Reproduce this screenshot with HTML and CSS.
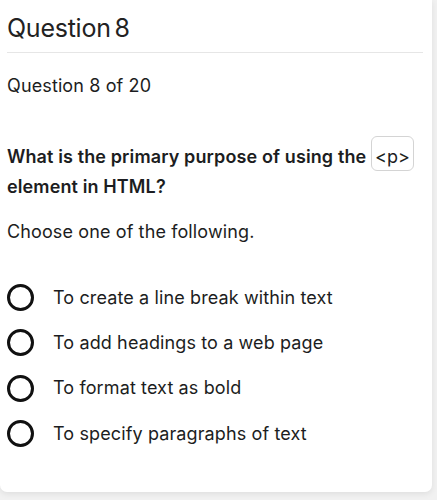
FILE: index.html
```html
<!DOCTYPE html>
<html lang="en">
<head>
<meta charset="utf-8">
<link rel="stylesheet" href="styles.css">
</head>
<body>
<div class="card">
  <h1 class="title">Question 8</h1>
  <hr class="rule">
  <p class="counter">Question 8 of 20</p>
  <p class="question">What is the primary purpose of using the <code class="tag">&lt;p&gt;</code> element in HTML?</p>
  <p class="hint">Choose one of the following.</p>
  <ul class="options">
    <li class="option"><span class="radio"></span><span class="label">To create a line break within text</span></li>
    <li class="option"><span class="radio"></span><span class="label">To add headings to a web page</span></li>
    <li class="option"><span class="radio"></span><span class="label">To format text as bold</span></li>
    <li class="option"><span class="radio"></span><span class="label">To specify paragraphs of text</span></li>
  </ul>
</div>
</body>
</html>
```
FILE: styles.css
```css
html, body {
  margin: 0;
  padding: 0;
}
body {
  background: #f1f1f1;
  font-family: Inter, "Noto Sans", sans-serif;
  color: #1c1d21;
  width: 437px;
  height: 500px;
  overflow: hidden;
}
.card {
  width: 432px;
  box-sizing: border-box;
  background: #fff;
  padding: 10px 9px 36px 7px;
  border-radius: 0 0 7px 7px;
  box-shadow: 0 2px 6px rgba(0,0,0,0.08);
}
.title {
  margin: 0;
  font-size: 25px;
  font-weight: 400;
  line-height: 36px;
  letter-spacing: -0.25px;
  word-spacing: -3px;
  color: #222;
}
.rule {
  margin: 6px 0 0;
  border: 0;
  border-top: 1px solid #e6e6e6;
  height: 0;
}
.counter {
  margin: 21px 0 0;
  font-size: 18px;
  letter-spacing: 0.12px;
  line-height: 24px;
}
.question {
  margin: 38px 0 0;
  font-size: 18px;
  letter-spacing: 0.12px;
  font-weight: 600;
  line-height: 30px;
}
.tag {
  display: inline-block;
  font-family: Inter, "Noto Sans", sans-serif;
  font-weight: 400;
  font-size: 18px;
  line-height: 21px;
  padding: 9px 3px 3px;
  border: 1px solid #d4d4d4;
  border-radius: 6px;
}
.hint {
  margin: 18px 0 0;
  font-size: 18px;
  letter-spacing: 0.12px;
  line-height: 24px;
}
.options {
  list-style: none;
  margin: 31px 0 0;
  padding: 0;
}
.option {
  display: flex;
  align-items: center;
  gap: 19px;
  height: 45.3px;
}
.radio {
  flex: none;
  width: 27px;
  height: 27px;
  box-sizing: border-box;
  border: 3px solid #111;
  border-radius: 50%;
}
.label {
  font-size: 18px;
  letter-spacing: 0.12px;
  line-height: 24px;
}
```
